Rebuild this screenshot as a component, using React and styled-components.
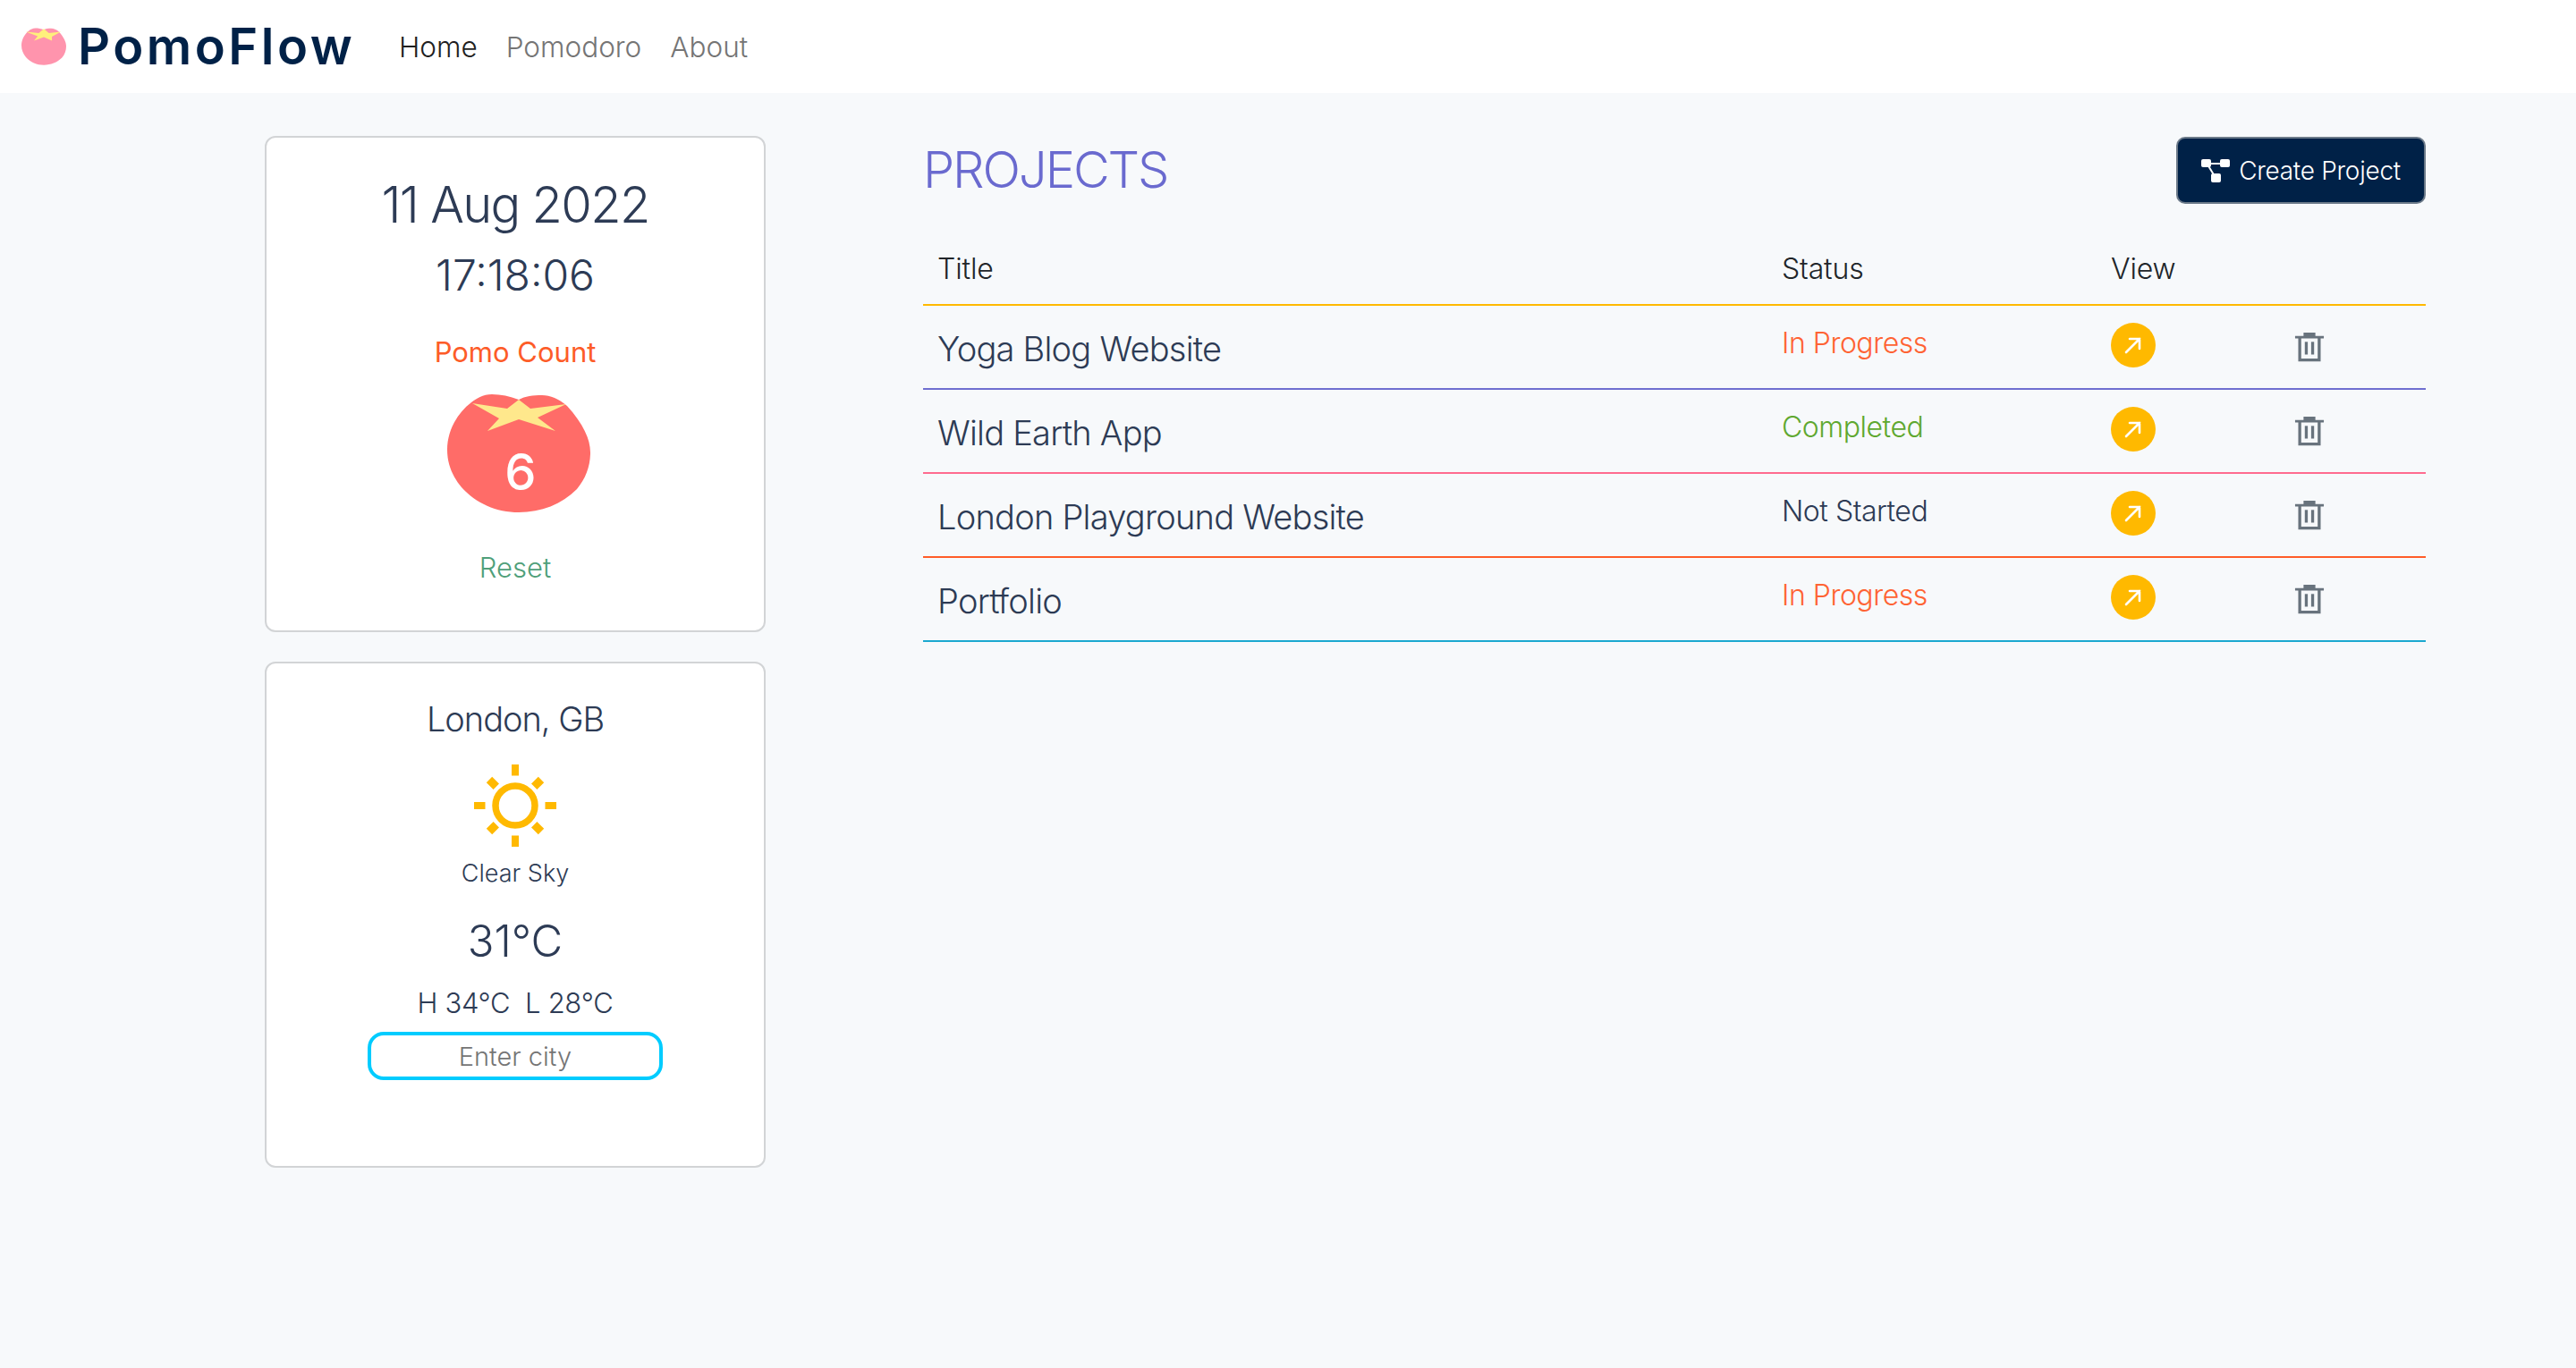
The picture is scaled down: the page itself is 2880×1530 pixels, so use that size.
import styled, { createGlobalStyle } from 'styled-components';

const GlobalStyle = createGlobalStyle`
  * {
    box-sizing: border-box;
  }

  body {
    margin: 0;
    background-color: #f7f9fb;
    font-family: Inter, "Liberation Sans", sans-serif;
    color: #2d3b55;
  }
`;

const Page = styled.div`
  min-height: 1530px;
  display: flex;
  flex-direction: column;
`;

const Navbar = styled.nav`
  height: 104px;
  background-color: #fff;
  display: flex;
  align-items: center;
  padding-left: 24px;
`;

const Brand = styled.div`
  display: flex;
  align-items: center;
  gap: 13px;
  width: 422px;
`;

const BrandName = styled.span`
  font-size: 56px;
  font-weight: 600;
  line-height: 1;
  letter-spacing: 3.5px;
  color: #002147;
`;

const NavLinks = styled.div`
  display: flex;
  gap: 32px;
`;

const NavLink = styled.a`
  font-size: 31.5px;
  font-weight: 300;
  color: ${props => (props.$active ? '#1f1f1f' : '#757575')};
`;

const Main = styled.main`
  display: grid;
  grid-template-columns: 560px 1680px;
  column-gap: 176px;
  padding: 48px 0 0 296px;
`;

const Sidebar = styled.aside`
  display: flex;
  flex-direction: column;
  gap: 33px;
`;

const Card = styled.section`
  background-color: #fff;
  border: 2px solid #d2d4d6;
  border-radius: 12px;
  display: flex;
  flex-direction: column;
  align-items: center;
  height: ${props => props.$height}px;
`;

const DateText = styled.div`
  font-size: 56px;
  font-weight: 300;
  line-height: 68px;
  letter-spacing: -0.03em;
  margin-top: 41px;
`;

const TimeText = styled.div`
  font-size: 48px;
  font-weight: 300;
  line-height: 58px;
  margin-top: 16px;
`;

const PomoLabel = styled.div`
  font-size: 31px;
  font-weight: 400;
  line-height: 38px;
  margin-top: 38px;
  color: #fd5c28;
`;

const TomatoBox = styled.div`
  position: relative;
  width: 160px;
  height: 132px;
  margin: 28px 0 0 8px;
`;

const TomatoCount = styled.span`
  position: absolute;
  top: 57px;
  left: 0;
  width: 100%;
  padding-left: 4px;
  text-align: center;
  font-size: 56px;
  font-weight: 500;
  line-height: 60px;
  color: #fff;
`;

const ResetButton = styled.button`
  border: 0;
  background: none;
  padding: 0;
  margin-top: 43px;
  font-family: inherit;
  font-size: 31px;
  font-weight: 300;
  line-height: 38px;
  color: #4f9f7a;
`;

const CityName = styled.div`
  font-size: 38px;
  font-weight: 300;
  line-height: 46px;
  letter-spacing: -0.027em;
  margin-top: 39px;
`;

const WeatherIcon = styled.svg`
  display: block;
  width: 92px;
  height: 92px;
  margin-top: 28px;
`;

const SkyText = styled.div`
  font-size: 27px;
  font-weight: 300;
  line-height: 34px;
  margin-top: 13px;
`;

const Temperature = styled.div`
  font-size: 49px;
  font-weight: 300;
  line-height: 60px;
  margin-top: 29px;
`;

const HighLow = styled.div`
  font-size: 31px;
  font-weight: 300;
  line-height: 38px;
  letter-spacing: -0.01em;
  margin-top: 20px;
  white-space: pre;
`;

const CityInput = styled.input`
  width: 330px;
  height: 54px;
  margin-top: 13px;
  border: 4px solid #00ccff;
  border-radius: 18px;
  background-color: #fff;
  outline: 0;
  text-align: center;
  font-family: inherit;
  font-size: 29px;
  font-weight: 300;

  &::placeholder {
    color: #757575;
    opacity: 1;
  }
`;

const Projects = styled.section`
  display: flex;
  flex-direction: column;
`;

const ProjectsHeader = styled.div`
  height: 76px;
  display: flex;
  align-items: center;
  justify-content: space-between;
`;

const Heading = styled.h1`
  margin: 0;
  font-size: 56px;
  font-weight: 300;
  letter-spacing: -0.037em;
  color: #6a6acf;
`;

const CreateButton = styled.button`
  width: 279px;
  height: 75px;
  padding: 2px 0 0;
  display: flex;
  align-items: center;
  justify-content: center;
  gap: 10px;
  background-color: #002147;
  border: 2px solid #6c7a89;
  border-radius: 10px;
  font-family: inherit;
  font-size: 28px;
  font-weight: 350;
  letter-spacing: -0.01em;
  color: #fff;
`;

const Row = styled.div`
  display: grid;
  grid-template-columns: 944px 368px 205px 1fr;
  align-items: center;
  padding: ${props => (props.$head ? '34px' : '0')} 0 0 16px;
  height: ${props => (props.$head ? 114 : 94)}px;
  border-bottom: 2px solid ${props => props.$line};
`;

const HeadCell = styled.div`
  font-size: 32px;
  font-weight: 350;
  line-height: 38px;
  letter-spacing: -0.005em;
  color: #212529;
`;

const TitleCell = styled.div`
  font-size: 38px;
  font-weight: 300;
  line-height: 46px;
  letter-spacing: -0.02em;
  margin-top: 3px;
`;

const StatusCell = styled.div`
  font-size: 32px;
  font-weight: 300;
  line-height: 38px;
  letter-spacing: -0.015em;
  margin-top: -9px;
  color: ${props => props.$color};
`;

const ViewButton = styled.span`
  width: 50px;
  height: 50px;
  margin-top: -4px;
  border-radius: 50%;
  background-color: #ffb900;
  display: flex;
  align-items: center;
  justify-content: center;
`;

const TrashIcon = styled.svg`
  display: block;
  width: 34px;
  height: 34px;
  color: #68737d;
`;

const projects = [
  { title: 'Yoga Blog Website', status: 'In Progress', color: '#ff6333', line: '#6f6fd0' },
  { title: 'Wild Earth App', status: 'Completed', color: '#5fa830', line: '#ff6b8f' },
  { title: 'London Playground Website', status: 'Not Started', color: '#2d3b55', line: '#ff5c28' },
  { title: 'Portfolio', status: 'In Progress', color: '#ff6333', line: '#1ba8cf' },
];

const BODY_PATH = 'M80 6C70 2 60 0 50 0C40 0 32 5 27 9C10 22 0 42 0 62C0 78 6 92 16 104C32 122 55 132 80 132C105 132 128 123 145 106C155 94 160 80 160 65C160 50 152 33 134 13C125 5 115 1 106 1C96 1 87 2 80 6Z';
const BIG_STAR = 'M80 6L93 16L133 11L101 26L121 41L80 28L45 41L58 27L28 10L67 16Z';
const LOGO_STAR = 'M80 3L98 18L141 13L109 31L109 45L80 32L45 45L58 29L16 13L62 18Z';

function Tomato({ body, star, starPath, width, height }) {
  return (
    <svg width={width} height={height} viewBox="0 0 160 132">
      <path d={BODY_PATH} fill={body} />
      <path d={starPath} fill={star} />
    </svg>
  );
}

function SunIcon() {
  return (
    <WeatherIcon viewBox="0 0 92 92">
      <circle cx="46" cy="46" r="22" fill="none" stroke="#ffb900" strokeWidth="7.5" />
      <g fill="#ffb900">
        <rect x="42" y="0" width="8" height="12.5" />
        <rect x="42" y="79.5" width="8" height="12.5" />
        <rect x="0" y="42" width="12.5" height="8" />
        <rect x="79.5" y="42" width="12.5" height="8" />
        <rect x="41.5" y="5" width="9" height="11" transform="rotate(45 46 46)" />
        <rect x="41.5" y="5" width="9" height="11" transform="rotate(135 46 46)" />
        <rect x="41.5" y="5" width="9" height="11" transform="rotate(225 46 46)" />
        <rect x="41.5" y="5" width="9" height="11" transform="rotate(315 46 46)" />
      </g>
    </WeatherIcon>
  );
}

function FlowIcon() {
  return (
    <svg width="32" height="26" viewBox="0 0 32 26">
      <path d="M8 5H24M7 6L15 19" stroke="#fff" strokeWidth="2" fill="none" />
      <rect x="0" y="0" width="11" height="9" rx="2" fill="#fff" />
      <rect x="21" y="0" width="11" height="9" rx="2" fill="#fff" />
      <rect x="11" y="16" width="11" height="10" rx="2" fill="#fff" />
    </svg>
  );
}

function ArrowIcon() {
  return (
    <svg width="22" height="22" viewBox="0 0 22 22" fill="none" stroke="#fff" strokeWidth="2.6" strokeLinecap="round">
      <path d="M3 19L18 4M7 4H18V15" />
    </svg>
  );
}

function Trash() {
  return (
    <TrashIcon viewBox="0 0 36 36">
      <path d="M11 1H25V5H35V8H1V5H11Z" fill="currentColor" />
      <path d="M6.5 7V33.5H29.5V7" fill="none" stroke="currentColor" strokeWidth="3.5" />
      <rect x="12.5" y="12" width="3.5" height="15" fill="currentColor" />
      <rect x="20" y="12" width="3.5" height="15" fill="currentColor" />
    </TrashIcon>
  );
}

export default function App() {
  return (
    <Page>
      <GlobalStyle />
      <Navbar>
        <Brand>
          <Tomato body="#ff94ad" star="#fff07c" starPath={LOGO_STAR} width={50} height={42} />
          <BrandName>PomoFlow</BrandName>
        </Brand>
        <NavLinks>
          <NavLink $active>Home</NavLink>
          <NavLink>Pomodoro</NavLink>
          <NavLink>About</NavLink>
        </NavLinks>
      </Navbar>
      <Main>
        <Sidebar>
          <Card $height={555}>
            <DateText>11 Aug 2022</DateText>
            <TimeText>17:18:06</TimeText>
            <PomoLabel>Pomo Count</PomoLabel>
            <TomatoBox>
              <Tomato body="#ff6c68" star="#ffe88c" starPath={BIG_STAR} width={160} height={132} />
              <TomatoCount>6</TomatoCount>
            </TomatoBox>
            <ResetButton>Reset</ResetButton>
          </Card>
          <Card $height={566}>
            <CityName>London, GB</CityName>
            <SunIcon />
            <SkyText>Clear Sky</SkyText>
            <Temperature>31°C</Temperature>
            <HighLow>H 34°C  L 28°C</HighLow>
            <CityInput placeholder="Enter city" />
          </Card>
        </Sidebar>
        <Projects>
          <ProjectsHeader>
            <Heading>PROJECTS</Heading>
            <CreateButton>
              <FlowIcon />
              Create Project
            </CreateButton>
          </ProjectsHeader>
          <Row $head $line="#ffb900">
            <HeadCell>Title</HeadCell>
            <HeadCell>Status</HeadCell>
            <HeadCell>View</HeadCell>
          </Row>
          {projects.map(project => (
            <Row key={project.title} $line={project.line}>
              <TitleCell>{project.title}</TitleCell>
              <StatusCell $color={project.color}>{project.status}</StatusCell>
              <ViewButton><ArrowIcon /></ViewButton>
              <Trash />
            </Row>
          ))}
        </Projects>
      </Main>
    </Page>
  );
}
